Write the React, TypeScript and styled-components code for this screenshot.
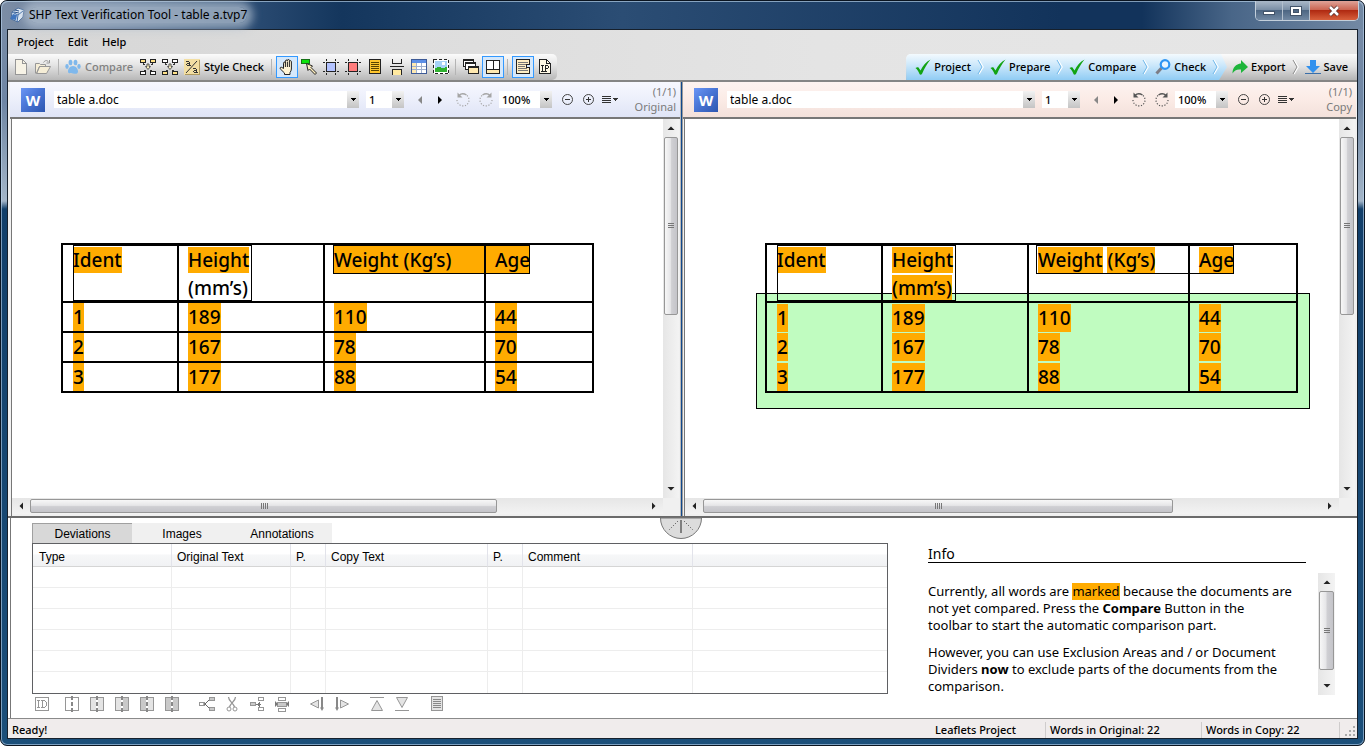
import React from "react";
import styled, { createGlobalStyle, css } from "styled-components";

const ui = `"Noto Sans", "Open Sans", sans-serif`;
const arial = `"Liberation Sans", Arial, sans-serif`;
const orange = "#ffab00";

const Global = createGlobalStyle`
  *, *::before, *::after { box-sizing: border-box; }
  body { margin: 0; font-family: ${ui}; font-size: 11px; color: #000; }
  button { border: 0; padding: 0; background: none; font: inherit; color: inherit; }
  svg { display: block; }
`;

/* ---------- window frame ---------- */

const Window = styled.div`
  display: flex;
  flex-direction: column;
  min-height: 100vh;
  border-radius: 7px;
  border: 1px solid #0a1420;
  padding: 0 7px 7px;
  box-shadow: inset 0 0 0 1px rgba(190, 215, 240, 0.6);
  background: linear-gradient(180deg, #7a8da8 0, #6f86a3 100px, #a3b5c8 200px, #123f6a 208px, #1b4f7a 100%);
`;

const TitleBar = styled.header`
  display: flex;
  align-items: center;
  height: 28px;
  margin: 0 -6px;
  padding-left: 7px;
  position: relative;
  border-radius: 6px 6px 0 0;
  background: linear-gradient(90deg, #7c8da5 0, #62799a 100px, #2a4b72 250px, #14365d 340px, #2b4d74 620px, #12335b 1060px, #12335b 1140px, #496688 1230px, #7389a4 100%);
  box-shadow: inset 0 1px 0 rgba(200, 225, 245, 0.6);
`;

const Title = styled.h1`
  margin: 0 0 0 4px;
  font-size: 12px;
  font-weight: 400;
  line-height: 16px;
  border-radius: 8px;
  background: rgba(178, 192, 208, 0.7);
  box-shadow: 0 0 8px 6px rgba(178, 192, 208, 0.7);
`;

const WindowButtons = styled.div`
  position: absolute;
  top: 0;
  right: 4px;
  display: flex;
  border: 1px solid #c3cfdb;
  border-top: 0;
  border-radius: 0 0 5px 5px;
  overflow: hidden;
`;

const WindowButton = styled.button<{ $close?: boolean }>`
  display: grid;
  place-items: center;
  width: ${(p) => (p.$close ? 48 : 27)}px;
  height: 19px;
  border-right: 1px solid #b3c0ce;
  background: ${(p) =>
    p.$close
      ? "linear-gradient(180deg, #dfa398 0, #cc6653 45%, #b02a12 50%, #d8603c 100%)"
      : "linear-gradient(180deg, #aab8c8 0, #7b8fa6 45%, #4d6683 50%, #7188a2 100%)"};
  &:last-child { border-right: 0; }
`;

const Client = styled.div`
  flex: 1;
  display: flex;
  flex-direction: column;
  border: 1px solid #16202c;
  margin: 0 -1px -1px;
  background: #fff;
`;

/* ---------- menu and toolbar ---------- */

const Chrome = styled.div`
  background: linear-gradient(90deg, #d6d6d6 0, #e4e4e4 60%, #e6e6e6 100%);
  border-bottom: 2px solid #858585;
`;

const MenuBar = styled.nav`
  display: flex;
  gap: 14px;
  align-items: center;
  height: 24px;
  padding-left: 9px;
`;

const MenuItem = styled.button`
  line-height: 16px;
  font-weight: 500;
`;

const ToolRow = styled.div`
  display: flex;
  justify-content: space-between;
  height: 26px;
`;

const ToolBar = styled.div`
  display: flex;
  align-items: center;
  padding: 0 1px 0 2px;
  border-radius: 0 5px 5px 0;
  background: linear-gradient(180deg, #fbfbfb 0, #e6e6e6 40%, #b8b8b8 100%);
`;

const ToolButton = styled.button<{ $on?: boolean }>`
  display: grid;
  place-items: center;
  width: 22px;
  height: 22px;
  ${(p) =>
    p.$on &&
    css`
      border: 1px solid #3399ff;
      background: #d5e8fb;
    `}
`;

const TextTool = styled.button<{ $dim?: boolean }>`
  display: flex;
  align-items: center;
  gap: 4px;
  height: 22px;
  padding: 0 4px 0 3px;
  font-weight: 500;
  line-height: 16px;
  color: ${(p) => (p.$dim ? "#808080" : "#000")};
`;

const Sep = styled.span`
  width: 8px;
  height: 16px;
  background: linear-gradient(#b4b4b4, #b4b4b4) center / 1px 100% no-repeat;
`;

const Steps = styled.div`
  display: flex;
  align-items: center;
  border-radius: 5px 0 0 0;
  overflow: hidden;
  padding-right: 5px;
  background: linear-gradient(180deg, #fbfbfb 0, #e0e0e0 50%, #b4b4b4 100%);
`;

const StepGroup = styled.div<{ $done?: boolean }>`
  display: flex;
  align-items: center;
  height: 26px;
  ${(p) =>
    p.$done &&
    css`
      padding: 0 7px 0 4px;
      background: linear-gradient(180deg, #f3fafe 0, #cfe9fb 40%, #90ccf4 100%);
      clip-path: polygon(0 0, calc(100% - 6px) 0, 100% 50%, calc(100% - 8px) 100%, 0 100%);
    `}
`;

const Step = styled.button`
  display: flex;
  align-items: center;
  gap: 3px;
  padding: 0 4px 0 5px;
  font-weight: 500;
  line-height: 16px;
`;

/* ---------- document panes ---------- */

const Panes = styled.main`
  flex: 1;
  display: grid;
  grid-template-columns: minmax(0, 670fr) 3px minmax(0, 673fr);
  padding: 0 1px 0 2px;
  background: #f0f0f0;
  border-bottom: 2px solid #6b6b6b;
`;

const Splitter = styled.div`
  background: linear-gradient(90deg, #b9b9b9 0, #b9b9b9 1px, #10488c 1px, #10488c 2px, #9a9a9a 2px);
`;

const Pane = styled.section`
  display: flex;
  flex-direction: column;
`;

const DocBar = styled.div<{ $tint: string }>`
  display: flex;
  align-items: center;
  height: 37px;
  padding: 0 4px 0 11px;
  background: ${(p) => p.$tint};
  border-bottom: 2px solid #777;
`;

const WordBadge = styled.span`
  display: grid;
  place-items: center;
  width: 24px;
  height: 24px;
  margin-right: 9px;
  background: linear-gradient(135deg, #6b96f5 0, #4a76d6 45%, #2c56b0 100%);
  color: #fff;
  font-family: "Open Sans", sans-serif;
  font-size: 15px;
  font-weight: 700;
`;

const Combo = styled.label<{ $width?: number }>`
  display: grid;
  grid-template-columns: minmax(0, 1fr) 12px;
  height: 17px;
  background: #fff;
  ${(p) => (p.$width ? `flex: 0 0 ${p.$width}px;` : "flex: 1; margin-right: 7px;")}
`;

const ComboArrow = styled.span`
  display: grid;
  place-items: center;
  background: linear-gradient(180deg, #f2f2f2, #c4c4c4);
`;

const Select = styled.select<{ $large?: boolean }>`
  appearance: none;
  min-width: 0;
  border: 0;
  padding: 1px 0 0 3px;
  background: transparent;
  font-family: ${ui};
  font-size: ${(p) => (p.$large ? 12 : 11)}px;
  font-weight: ${(p) => (p.$large ? 400 : 500)};
  line-height: 16px;
  color: #000;
`;

const BarButtons = styled.div<{ $step: number; $pad?: string }>`
  display: flex;
  padding: ${(p) => p.$pad ?? "0"};
  button {
    display: grid;
    place-items: center;
    width: ${(p) => p.$step}px;
    height: 20px;
  }
`;

const DocLabel = styled.div`
  flex: 0 0 52px;
  padding-bottom: 2px;
  text-align: right;
  line-height: 15px;
  font-size: 11px;
  color: #7a7a7a;
`;

const View = styled.div`
  flex: 1;
  display: grid;
  grid-template: minmax(0, 1fr) 16px / minmax(0, 1fr) 16px;
  margin-left: 1px;
  padding: 0 1px 2px 0;
  border-left: 1px solid #777;
  background: #f0f0f0;
`;

const Page = styled.div<{ $left: number }>`
  min-height: 378px;
  padding: 124px 0 0 ${(p) => p.$left}px;
  background: #fff;
  overflow: hidden;
`;

const Sheet = styled.div`
  position: relative;
  isolation: isolate;
  width: 533px;
`;

const DocTable = styled.table<{ $excluded?: boolean }>`
  width: 533px;
  table-layout: fixed;
  border-collapse: collapse;
  font-size: 19px;
  line-height: 28px;
  font-weight: 500;
  border: 2px solid #000;
  tr { height: 30px; }
  thead tr { height: 58px; border-bottom: 2px solid #000; }
  th, td {
    padding: 0 0 0 10px;
    text-align: left;
    font-weight: 500;
    border-left: 2px solid #000;
    border-right: 2px solid #000;
    white-space: nowrap;
  }
  th + th, td + td { padding-left: 9px; }
  th { vertical-align: top; }
  tbody tr { ${(p) => (p.$excluded ? "" : "border-bottom: 2px solid #000;")} }
`;

const Line = styled.div`
  height: 28px;
  padding-top: 2px;
`;

const Word = styled.mark<{ $plain?: boolean }>`
  display: inline-block;
  color: #000;
  line-height: 28px;
  vertical-align: top;
  background: ${(p) => (p.$plain ? "transparent" : orange)};
  ${Line} & { line-height: 26px; }
`;

const Area = styled.div<{ $box: [number, number, number, number]; $fill?: string; $front?: boolean }>`
  position: absolute;
  left: ${(p) => p.$box[0]}px;
  top: ${(p) => p.$box[1]}px;
  width: ${(p) => p.$box[2]}px;
  height: ${(p) => p.$box[3]}px;
  border: 1px solid #000;
  background: ${(p) => p.$fill ?? "transparent"};
  z-index: ${(p) => (p.$front ? 1 : -1)};
`;

/* ---------- scroll bars ---------- */

const Track = styled.div<{ $dir: "v" | "h" }>`
  display: flex;
  flex-direction: ${(p) => (p.$dir === "v" ? "column" : "row")};
  align-items: stretch;
  background: ${(p) =>
    p.$dir === "v" ? "linear-gradient(90deg, #e6e6e6, #f3f3f3)" : "linear-gradient(180deg, #e6e6e6, #f3f3f3)"};
  button {
    display: grid;
    place-items: center;
    flex: 0 0 18px;
  }
`;

const Rail = styled.div<{ $dir: "v" | "h" }>`
  flex: 1;
  min-height: 0;
  display: flex;
  flex-direction: ${(p) => (p.$dir === "v" ? "column" : "row")};
`;

const Thumb = styled.div<{ $dir: "v" | "h"; $size: number }>`
  flex: 0 0 ${(p) => p.$size}%;
  display: grid;
  place-items: center;
  margin: ${(p) => (p.$dir === "v" ? "0 1px" : "1px 0")};
  border: 1px solid #979797;
  border-radius: 2px;
  background: ${(p) =>
    `linear-gradient(${p.$dir === "v" ? 90 : 180}deg, #f7f7f7 0, #e6e6e8 45%, #cfcfd3 55%, #c4c4c9 100%)`};
`;

/* ---------- bottom panel ---------- */

const Bottom = styled.section`
  position: relative;
  display: flex;
  margin-left: 2px;
  border-left: 1px solid #777;
  padding: 5px 22px 4px 21px;
  background: #fff;
`;

const Handle = styled.button`
  position: absolute;
  top: -1px;
  left: 50%;
  margin-left: -24px;
`;

const Lists = styled.div`
  flex: 1;
  min-width: 0;
`;

const Tabs = styled.div`
  display: flex;
  height: 20px;
  font-family: ${arial};
  font-size: 12px;
`;

const Tab = styled.button<{ $on?: boolean }>`
  width: 100px;
  padding: ${(p) => (p.$on ? "1px 0 0" : "2px 0 0")};
  background: ${(p) => (p.$on ? "#d8d8d8" : "#f0f0f0")};
  border: solid #a0a0a0;
  border-width: ${(p) => (p.$on ? "1px 0 0 1px" : "0")};
`;

const Grid = styled.table`
  width: 100%;
  table-layout: fixed;
  border-collapse: separate;
  border-spacing: 0;
  border: 1px solid #5f6063;
  font-family: ${arial};
  font-size: 12px;
  th {
    height: 23px;
    padding: 3px 0 0 6px;
    text-align: left;
    font-weight: 400;
    border-right: 1px solid #e2e3ea;
    border-bottom: 1px solid #d5d5d5;
    background: linear-gradient(180deg, #fff 0, #fff 45%, #f6f7f8 50%, #f1f2f4 100%);
  }
  th + th { padding-left: 5px; }
  td {
    height: 21px;
    padding: 0;
    border-right: 1px solid #ededed;
    border-bottom: 1px solid #ededed;
  }
  th:last-child, td:last-child { border-right: 0; }
  tbody tr:last-child td { border-bottom: 0; }
`;

const EditRow = styled.div`
  display: flex;
  height: 20px;
  margin-left: -3px;
`;

const EditButton = styled.button<{ $gap?: number }>`
  display: grid;
  place-items: center;
  width: 25px;
  margin-left: ${(p) => p.$gap ?? 0}px;
`;

const Info = styled.aside`
  flex: 0 0 407px;
  margin-left: 40px;
  padding-top: 23px;
`;

const InfoTitle = styled.h2`
  margin: 0 29px 10px 0;
  font-size: 14px;
  font-weight: 400;
  line-height: 16px;
  border-bottom: 1px solid #000;
`;

const InfoBody = styled.div`
  display: grid;
  grid-template-columns: minmax(0, 1fr) 17px;
  height: 121px;
`;

const InfoText = styled.div`
  padding: 10px 18px 0 0;
  font-size: 13px;
  line-height: 17px;
  p { margin: 0; white-space: nowrap; }
  p + p { margin-top: 10px; }
  mark { display: inline-block; background: ${orange}; line-height: 17px; }
`;

const Status = styled.footer`
  display: flex;
  align-items: center;
  height: 20px;
  padding-top: 2px;
  border-top: 1px solid #8a8a8a;
  background: #f0ecec;
  font-weight: 500;
  line-height: 16px;
`;

const Cell = styled.span<{ $width?: number }>`
  ${(p) => (p.$width ? `flex: 0 0 ${p.$width}px;` : "flex: 1;")}
  padding-left: 4px;
  border-right: ${(p) => (p.$width ? "1px solid #cfcccc" : "0")};
`;

/* ---------- drawings ---------- */

const Ico: React.FC<{ w?: number; h?: number; crisp?: boolean; children: React.ReactNode }> = ({
  w = 16,
  h = 16,
  crisp = true,
  children,
}) => (
  <svg width={w} height={h} viewBox={`0 0 ${w} ${h}`} fill="none" shapeRendering={crisp ? "crispEdges" : "auto"} aria-hidden>
    {children}
  </svg>
);

const Tri: React.FC<{ d: "u" | "d" | "l" | "r"; color?: string; big?: boolean }> = ({ d, color = "#222", big }) => {
  const paths = {
    u: "M0.500 6 L4 2.500 L7.500 6Z",
    d: "M0.500 2 L7.500 2 L4 5.500Z",
    l: big ? "M6 0 L6 8 L2 4Z" : "M6 0.500 L6 7.500 L2.500 4Z",
    r: big ? "M2 0 L2 8 L6 4Z" : "M2 0.500 L2 7.500 L5.500 4Z",
  };
  return (
    <Ico w={8} h={8} crisp={false}>
      <path d={paths[d]} fill={color} />
    </Ico>
  );
};

const Flow: React.FC<{ top: string; bottom: string }> = ({ top, bottom }) => (
  <Ico>
    <path d="M3.500 4v1.500h1.500M12.500 4v1.500h-1.500M4 11.500h2M10 11.500h2" stroke="#333" />
    <rect x="0.500" y="0.500" width="5" height="3" fill={top} stroke="#222" />
    <rect x="10.500" y="0.500" width="5" height="3" fill={top} stroke="#222" />
    <rect x="0.500" y="12.500" width="5" height="3" fill={bottom} stroke="#222" />
    <rect x="10.500" y="12.500" width="5" height="3" fill={bottom} stroke="#222" />
    <path d="M7 5h2v2.500h1.500L8 10.500 5.500 7.500H7z" fill="#fff3c0" stroke="#555" shapeRendering="auto" />
  </Ico>
);

const Crop: React.FC<{ fill: string }> = ({ fill }) => (
  <Ico>
    <rect x="3.500" y="3.500" width="9" height="9" fill={fill} stroke="#222" />
    <path d="M0 3.500h2M0 12.500h2M14 3.500h2M14 12.500h2M3.500 0v2M12.500 0v2M3.500 14v2M12.500 14v2" stroke="#222" />
  </Ico>
);

const Check = () => (
  <Ico crisp={false}>
    <path d="M0.500 9 C2 8 3 8 3.500 8.500 L5.500 11.500 C8 6.500 11 3 15.500 0.500 C12 5 9.500 9 7 15 C6 16 5 16 4.500 15 C3.500 12.500 2.500 10.500 0.500 9Z" fill="#12a312" />
  </Ico>
);

const Chevron: React.FC<{ color?: string }> = ({ color = "#6fb8ea" }) => (
  <Ico w={10} h={18} crisp={false}>
    <path d="M4 2 L8 9 L4 16" stroke="#fff" strokeWidth="1.500" />
    <path d="M3 2 L7 9 L3 16" stroke={color} />
  </Ico>
);

const Rotate: React.FC<{ cw?: boolean; color: string }> = ({ cw, color }) => (
  <Ico crisp={false}>
    <g transform={cw ? "translate(16 0) scale(-1 1)" : undefined}>
      <path d="M12 3.500 A6 6 0 1 1 2 8" stroke={color} strokeWidth="1.200" strokeDasharray="1.200 1.600" />
      <path d="M4 3.500 C6 1.500 9 1.500 11.500 3" stroke={color} strokeWidth="1.400" />
      <path d="M2.500 0.500v5h5z" fill={color} />
    </g>
  </Ico>
);

const Zoom: React.FC<{ plus?: boolean }> = ({ plus }) => (
  <Ico w={13} h={13} crisp={false}>
    <circle cx="6.500" cy="6.500" r="5" stroke="#444" />
    <path d={plus ? "M4 6.500h5M6.500 4v5" : "M4 6.500h5"} stroke="#333" />
  </Ico>
);

const MenuIcon = () => (
  <Ico w={16} h={10}>
    <path d="M0 1.500h9M0 3.500h9M0 5.500h9M0 7.500h9" stroke="#333" />
    <path d="M10 3h6l-3 3z" fill="#333" />
  </Ico>
);

const GREY = "#969696";
const LIGHT = "#e4e4e4";
const MID = "#c9c9c9";

const Split: React.FC<{ l: string; r: string }> = ({ l, r }) => (
  <Ico>
    <rect x="1" y="2" width="7" height="12" fill={l} />
    <rect x="8" y="2" width="7" height="12" fill={r} />
    <rect x="1.500" y="1.500" width="13" height="13" stroke={GREY} />
    <path d="M8 0v16" stroke="#fff" strokeWidth="2" />
    <path d="M8 0v16" stroke="#888" strokeWidth="2" strokeDasharray="4 2" />
  </Ico>
);

const editIcons: { name: string; gap?: number; icon: React.ReactNode }[] = [
  {
    name: "Identifier",
    icon: (
      <Ico>
        <rect x="1.500" y="1.500" width="13" height="13" stroke={GREY} />
        <path d="M3 4.500h3M3 11.500h3M4.500 4v8M7 4.500h4M7 11.500h4M8.500 4v8M11.500 5v1M12.500 6v4M11.500 10v1" stroke={GREY} />
      </Ico>
    ),
  },
  { name: "No side", gap: 5, icon: <Split l="#fff" r="#fff" /> },
  { name: "Both light", icon: <Split l={LIGHT} r={LIGHT} /> },
  { name: "Right side", icon: <Split l={LIGHT} r={MID} /> },
  { name: "Left side", icon: <Split l={MID} r={LIGHT} /> },
  { name: "Both sides", icon: <Split l={MID} r={MID} /> },
  {
    name: "Branch",
    gap: 10,
    icon: (
      <Ico>
        <rect x="0.500" y="6.500" width="5" height="3" stroke={GREY} />
        <rect x="10.500" y="1.500" width="5" height="3" fill={MID} stroke={GREY} />
        <rect x="10.500" y="11.500" width="5" height="3" fill={MID} stroke={GREY} />
        <path d="M4 8h2l4-4M6 8l4 4" stroke="#666" shapeRendering="auto" />
      </Ico>
    ),
  },
  {
    name: "Cut",
    icon: (
      <Ico crisp={false}>
        <path d="M4.500 1c0 4 5 6 6 10M11.500 1c0 4-5 6-6 10" stroke={GREY} strokeWidth="1.300" />
        <circle cx="5" cy="13" r="2" stroke={GREY} />
        <circle cx="11" cy="13" r="2" stroke={GREY} />
      </Ico>
    ),
  },
  {
    name: "Join",
    icon: (
      <Ico>
        <rect x="1.500" y="6.500" width="5" height="3" fill={MID} stroke={GREY} />
        <rect x="9.500" y="1.500" width="5" height="3" stroke={GREY} />
        <rect x="9.500" y="11.500" width="5" height="3" stroke={GREY} />
        <path d="M7 8.500h5M9.500 7v3M10.500 6v5" stroke="#777" />
      </Ico>
    ),
  },
  {
    name: "Merge",
    icon: (
      <Ico>
        <rect x="4.500" y="1.500" width="7" height="3" stroke={GREY} />
        <rect x="3.500" y="6.500" width="9" height="4" fill={MID} stroke={GREY} />
        <rect x="4.500" y="12.500" width="7" height="3" stroke={GREY} />
        <path d="M1 5v6l3-3zM15 5v6l-3-3z" fill="#777" shapeRendering="auto" />
      </Ico>
    ),
  },
  {
    name: "Previous",
    gap: 10,
    icon: (
      <Ico crisp={false}>
        <path d="M9.500 4v8l-8-4z" fill={LIGHT} stroke={GREY} />
        <path d="M13 1v11" stroke="#888" strokeWidth="2" />
        <path d="M11 11.500h4l-2 3.500z" fill="#888" />
      </Ico>
    ),
  },
  {
    name: "Next",
    icon: (
      <Ico crisp={false}>
        <path d="M6.500 4v8l8-4z" fill={LIGHT} stroke={GREY} />
        <path d="M3 1v11" stroke="#888" strokeWidth="2" />
        <path d="M1 11.500h4l-2 3.500z" fill="#888" />
      </Ico>
    ),
  },
  {
    name: "First",
    gap: 10,
    icon: (
      <Ico crisp={false}>
        <path d="M1 1.500h14" stroke={GREY} />
        <path d="M8 4.500l5.500 10h-11z" fill={LIGHT} stroke={GREY} />
      </Ico>
    ),
  },
  {
    name: "Last",
    icon: (
      <Ico crisp={false}>
        <path d="M1 14.500h14" stroke={GREY} />
        <path d="M8 11.500l-5.500-10h11z" fill={LIGHT} stroke={GREY} />
      </Ico>
    ),
  },
  {
    name: "Report",
    gap: 10,
    icon: (
      <Ico>
        <rect x="2.500" y="0.500" width="11" height="14" fill={LIGHT} stroke={GREY} />
        <path d="M4 3.500h8M4 5.500h8M4 7.500h8M4 9.500h8M4 11.500h8" stroke="#888" />
      </Ico>
    ),
  },
];

const viewTools: { name: string; on?: boolean; sep?: boolean; icon: React.ReactNode }[] = [
  {
    name: "Hand",
    on: true,
    icon: (
      <Ico crisp={false}>
        <path d="M4.500 9.500V4.200c0-1.500 1.900-1.500 1.900 0V2.200c0-1.600 2-1.600 2 0v-.7c0-1.400 2-1.400 2 0v1.200c0-1.400 2-1.400 2 0v7.300c0 1.500-.8 2.500-1.400 3.500v2H5.500v-1.500L1.200 9.800C.6 8.600 2 7.700 3 8.500z" fill="#fff4d4" stroke="#222" />
        <path d="M6.400 4v4M8.400 3v5M10.400 3v5" stroke="#222" />
      </Ico>
    ),
  },
  {
    name: "Select word",
    icon: (
      <Ico crisp={false}>
        <rect x="0.500" y="0.500" width="8" height="4" fill="#0be30b" stroke="#157015" />
        <path d="M5.500 4.500l6 2.500-1.500 1.500 5.500 5.500-1.500 1.500-5.500-5.500-1.500 1.500z" fill="#fff0c0" stroke="#222" />
      </Ico>
    ),
  },
  { name: "Include area", icon: <Crop fill="#b3c3ff" /> },
  { name: "Exclude area", icon: <Crop fill="#ff7d7d" /> },
  {
    name: "Text block",
    icon: (
      <Ico>
        <rect x="2.500" y="0.500" width="11" height="14" fill="#ffc62e" stroke="#222" />
        <path d="M4 3.500h8M4 5.500h8M4 7.500h8M4 9.500h8M4 11.500h8" stroke="#5a4400" />
      </Ico>
    ),
  },
  {
    name: "Divider",
    icon: (
      <Ico>
        <path d="M3.500 0v4.500h9V0M3.500 16v-5.500h9V16" stroke="#222" />
        <rect x="4" y="11" width="8" height="5" fill="#ffe9a0" />
        <path d="M1 7.500h14" stroke="#222" />
      </Ico>
    ),
  },
  {
    name: "Table",
    icon: (
      <Ico>
        <rect x="0.500" y="0.500" width="15" height="14" fill="#fff" stroke="#3d5a96" />
        <rect x="1" y="1" width="14" height="3" fill="#5d8fe6" />
        <rect x="1" y="4" width="4" height="10" fill="#ffe9b0" />
        <path d="M1 7.500h14M1 10.500h14M5.500 4v10M10.500 4v10" stroke="#9fb0cf" />
      </Ico>
    ),
  },
  {
    name: "Image",
    icon: (
      <Ico>
        <rect x="0.500" y="0.500" width="15" height="14" fill="#fff" stroke="#222" strokeDasharray="3 2" />
        <rect x="2" y="2" width="12" height="11" fill="#a6d2f7" />
        <path d="M2 13v-4l4-1 3 1 5-1v5z" fill="#2fb02f" />
        <rect x="9" y="3" width="3" height="3" fill="#fff" />
      </Ico>
    ),
  },
  {
    name: "Cascade",
    sep: true,
    icon: (
      <Ico>
        <path d="M0.500 0.500h10v7h-10zM0 1.500h11" fill="#fff" stroke="#222" />
        <path d="M2.500 3.500h10v7h-10zM2 4.500h11" fill="#fff" stroke="#222" />
        <path d="M5.500 7.500h10v7h-10zM5 8.500h11" fill="#ffe9b0" stroke="#222" />
      </Ico>
    ),
  },
  {
    name: "Split view",
    on: true,
    icon: (
      <Ico>
        <rect x="1" y="1" width="14" height="14" fill="#fff" />
        <rect x="1" y="10" width="14" height="5" fill="#ffe9b0" />
        <path d="M1.500 1.500h13v13h-13zM8 2v8M1 10.500h14" stroke="#222" />
      </Ico>
    ),
  },
  {
    name: "Text flow",
    on: true,
    sep: true,
    icon: (
      <Ico>
        <path d="M1.500 0.500h13v5h-3v3h3v6h-13z" fill="#ffefc4" stroke="#222" />
        <path d="M3 3.500h10M3 5.500h8M3 7.500h7M3 9.500h9M3 11.500h10" stroke="#777" />
      </Ico>
    ),
  },
  {
    name: "Properties",
    icon: (
      <Ico>
        <path d="M2.500 0.500h7l4 4v10h-11z" fill="#fff8e4" stroke="#222" />
        <path d="M9.500 1v3.500h4" stroke="#222" />
        <path d="M4 6.500h3M4 12.500h3M5.500 6v7M8.500 6v7M9 6.500h2M11.500 7v2M9 9.500h2M7 12.500h3" stroke="#222" />
      </Ico>
    ),
  },
];

/* ---------- components ---------- */

const ScrollBar: React.FC<{ dir: "v" | "h"; size: number }> = ({ dir, size }) => (
  <Track $dir={dir}>
    <button aria-label="Scroll back">
      <Tri d={dir === "v" ? "u" : "l"} />
    </button>
    <Rail $dir={dir}>
      <Thumb $dir={dir} $size={size}>
        <Ico w={8} h={8}>
          <path d={dir === "v" ? "M1 1.500h6M1 3.500h6M1 5.500h6" : "M1.500 1v6M3.500 1v6M5.500 1v6M7.500 1v6"} stroke="#777" />
        </Ico>
      </Thumb>
    </Rail>
    <button aria-label="Scroll forward">
      <Tri d={dir === "v" ? "d" : "r"} />
    </button>
  </Track>
);

const Drop: React.FC<{ label: string; value: string; width?: number; large?: boolean }> = ({ label, value, width, large }) => (
  <Combo $width={width}>
    <Select aria-label={label} $large={large} defaultValue={value}>
      <option>{value}</option>
    </Select>
    <ComboArrow>
      <Ico w={6} h={4}>
        <path d="M0 0h6L3 3z" fill="#000" />
      </Ico>
    </ComboArrow>
  </Combo>
);

type PaneProps = { side: string; tint: string; rotate: string; children: React.ReactNode; pageLeft: number };

const DocumentPane: React.FC<PaneProps> = ({ side, tint, rotate, children, pageLeft }) => (
  <Pane aria-label={side}>
    <DocBar $tint={tint}>
      <WordBadge>W</WordBadge>
      <Drop label="File" value="table a.doc" large />
      <Drop label="Page" value="1" width={38} />
      <BarButtons $step={20} $pad="0 0 0 6px">
        <button aria-label="Previous page"><Tri d="l" big color="#888" /></button>
        <button aria-label="Next page"><Tri d="r" big color="#000" /></button>
      </BarButtons>
      <BarButtons $step={23} $pad="0 2px 0 1px">
        <button aria-label="Rotate left"><Rotate color={rotate} /></button>
        <button aria-label="Rotate right"><Rotate cw color={rotate} /></button>
      </BarButtons>
      <Drop label="Zoom" value="100%" width={53} />
      <BarButtons $step={21} $pad="0 4px 0 5px">
        <button aria-label="Zoom out"><Zoom /></button>
        <button aria-label="Zoom in"><Zoom plus /></button>
        <button aria-label="View options"><MenuIcon /></button>
      </BarButtons>
      <DocLabel>
        (1/1)
        <br />
        {side}
      </DocLabel>
    </DocBar>
    <View>
      <Page $left={pageLeft}>
        <Sheet>{children}</Sheet>
      </Page>
      <ScrollBar dir="v" size={52} />
      <ScrollBar dir="h" size={76} />
    </View>
  </Pane>
);

const rows = [
  ["1", "189", "110", "44"],
  ["2", "167", "78", "70"],
  ["3", "177", "88", "54"],
];

const DataTable: React.FC<{ copy?: boolean }> = ({ copy }) => (
  <DocTable $excluded={copy}>
    <colgroup>
      <col style={{ width: 116 }} />
      <col style={{ width: 146 }} />
      <col style={{ width: 161 }} />
      <col />
    </colgroup>
    <thead>
      <tr>
        <th><Line><Word>Ident</Word></Line></th>
        <th>
          <Line><Word>Height</Word></Line>
          <Line><Word $plain={!copy}>(mm’s)</Word></Line>
        </th>
        <th><Line><Word>Weight</Word> <Word>(Kg’s)</Word></Line></th>
        <th><Line><Word>Age</Word></Line></th>
      </tr>
    </thead>
    <tbody>
      {rows.map((r) => (
        <tr key={r[0]}>
          {r.map((c) => (
            <td key={c}><Word>{c}</Word></td>
          ))}
        </tr>
      ))}
    </tbody>
  </DocTable>
);

const columns: [string, number?][] = [
  ["Type", 139],
  ["Original Text", 119],
  ["P.", 35],
  ["Copy Text", 162],
  ["P.", 35],
  ["Comment", 170],
  [""],
];

export default function App() {
  return (
    <>
      <Global />
      <Window>
        <TitleBar>
          <Ico crisp={false}>
            <path d="M3 5l6-4 6 2-1 7-5 5-7-3z" fill="#dfeaf6" stroke="#4d6f9c" />
            <path d="M3 5l6 3 5-4M9 8l-1 7" stroke="#3d6aa8" />
            <path d="M1 12l3-5 4 1-1 5z" fill="#3f74bd" />
            <path d="M6 3l4 1M5 5l5 1" stroke="#274f88" />
          </Ico>
          <Title>SHP Text Verification Tool - table a.tvp7</Title>
          <WindowButtons>
            <WindowButton aria-label="Minimize">
              <Ico w={12} h={12}><rect x="0.500" y="6.500" width="11" height="3" fill="#fff" stroke="#43546a" /></Ico>
            </WindowButton>
            <WindowButton aria-label="Maximize">
              <Ico w={12} h={12}>
                <rect x="2" y="3" width="8" height="6" stroke="#fff" strokeWidth="2" />
                <path d="M0.500 1.500h11v9h-11zM3.500 4.500h5v3h-5z" stroke="#43546a" />
              </Ico>
            </WindowButton>
            <WindowButton $close aria-label="Close">
              <Ico w={12} h={12} crisp={false}>
                <path d="M2 2l8 8M10 2l-8 8" stroke="#55322f" strokeWidth="4" />
                <path d="M2 2l8 8M10 2l-8 8" stroke="#fff" strokeWidth="2.500" />
              </Ico>
            </WindowButton>
          </WindowButtons>
        </TitleBar>
        <Client>
          <Chrome>
            <MenuBar>
              <MenuItem>Project</MenuItem>
              <MenuItem>Edit</MenuItem>
              <MenuItem>Help</MenuItem>
            </MenuBar>
            <ToolRow>
              <ToolBar>
                <ToolButton aria-label="New">
                  <Ico>
                    <path d="M2.500 0.500h7l4 4v11h-11z" fill="#f7f3e6" stroke="#969696" />
                    <path d="M9.500 1v3.500h4" stroke="#969696" />
                  </Ico>
                </ToolButton>
                <ToolButton aria-label="Open">
                  <Ico crisp={false}>
                    <path d="M0.500 14.500v-10h4l1 1h5v2h-6l-3 7M1.500 14.500h10l4-7h-11z" fill="#f5edd6" stroke="#969696" />
                    <path d="M8.500 3.500c2-3 4-2 5-.5M14.500 1v3h-3" stroke="#969696" />
                  </Ico>
                </ToolButton>
                <Sep />
                <TextTool $dim>
                  <Ico crisp={false}>
                    <path d="M8 7c3 0 5 3 5 5.500S11 15 8 14.500 3 15 3 12.500 5 7 8 7z" fill="#7fb8ec" />
                    <ellipse cx="5.500" cy="3.500" rx="1.900" ry="2.800" fill="#7fb8ec" />
                    <ellipse cx="10.500" cy="3.500" rx="1.900" ry="2.800" fill="#7fb8ec" />
                    <ellipse cx="2" cy="7.500" rx="1.700" ry="2.400" fill="#7fb8ec" />
                    <ellipse cx="14" cy="7.500" rx="1.700" ry="2.400" fill="#7fb8ec" />
                  </Ico>
                  Compare
                </TextTool>
                <ToolButton aria-label="Compare originals"><Flow top="#ffe28a" bottom="#fff" /></ToolButton>
                <ToolButton aria-label="Compare copies"><Flow top="#fff" bottom="#ffe28a" /></ToolButton>
                <TextTool>
                  <Ico>
                    <rect width="16" height="16" fill="#f3dfa3" />
                    <path d="M0.500 15.500h15V0.500" stroke="#b09a5e" />
                    <path d="M2 14L13 2" stroke="#333" shapeRendering="auto" />
                    <path d="M2 2.500h3M5.500 3v4M3 4.500h2M2.500 5v1M3 6.500h4M9 9.500h3M12.500 10v4M10 11.500h2M9.500 12v1M10 13.500h4" stroke="#333" />
                  </Ico>
                  Style Check
                </TextTool>
                <Sep />
                {viewTools.map((t) => (
                  <React.Fragment key={t.name}>
                    {t.sep && <Sep />}
                    <ToolButton $on={t.on} aria-label={t.name}>{t.icon}</ToolButton>
                  </React.Fragment>
                ))}
              </ToolBar>
              <Steps>
                <StepGroup $done>
                  <Step><Check />Project</Step>
                  <Chevron />
                  <Step><Check />Prepare</Step>
                  <Chevron />
                  <Step><Check />Compare</Step>
                  <Chevron />
                  <Step>
                    <Ico crisp={false}>
                      <path d="M6.500 9L1.500 14.500" stroke="#7d7d86" strokeWidth="3" />
                      <circle cx="10" cy="5.500" r="4.300" fill="#e9f5ff" stroke="#2f95f3" strokeWidth="2.200" />
                    </Ico>
                    Check
                  </Step>
                  <Chevron />
                </StepGroup>
                <StepGroup>
                  <Step>
                    <Ico crisp={false}>
                      <path d="M9 1l7 7-7 6v-3.500C5 10 2.500 11 0.500 14.500 0.500 8.500 4 5 9 4.500z" fill="#1db53a" />
                    </Ico>
                    Export
                  </Step>
                  <Chevron color="#8c8c8c" />
                  <Step>
                    <Ico crisp={false}>
                      <path d="M5 1h6v6h4l-7 7-7-7h4z" fill="#3191ee" />
                      <path d="M0 14.500h16" stroke="#3a6ea8" />
                    </Ico>
                    Save
                  </Step>
                </StepGroup>
              </Steps>
            </ToolRow>
          </Chrome>

          <Panes>
            <DocumentPane
              side="Original"
              tint="linear-gradient(180deg, #f7f8ff 0, #eceffb 50%, #dfe4f6 100%)"
              rotate="#a5a5a5"
              pageLeft={49}
            >
              <Area $box={[12, 2, 179, 56]} $front />
              <Area $box={[272, 2, 197, 29]} $fill={orange} />
              <Area $box={[272, 2, 197, 29]} $front />
              <DataTable />
            </DocumentPane>
            <Splitter />
            <DocumentPane
              side="Copy"
              tint="linear-gradient(180deg, #fdf3f0 0, #fbebe6 50%, #f3e1db 100%)"
              rotate="#555"
              pageLeft={80}
            >
              <Area $box={[-9, 50, 554, 116]} $fill="#c0fcc0" />
              <Area $box={[12, 2, 179, 56]} $front />
              <Area $box={[271, 2, 198, 29]} $front />
              <DataTable copy />
            </DocumentPane>
          </Panes>

          <Bottom>
            <Handle aria-label="Resize panels">
              <Ico w={42} h={22} crisp={false}>
                <path d="M0.500 1 A20 20 0 0 0 41.500 1Z" fill="#dcdcdc" stroke="#777" />
                <path d="M21 3v13" stroke="#222" />
                <path d="M18 4l-9 9M24 4l9 9" stroke="#444" strokeDasharray="1 2" />
              </Ico>
            </Handle>
            <Lists>
              <Tabs role="tablist">
                <Tab role="tab" $on>Deviations</Tab>
                <Tab role="tab">Images</Tab>
                <Tab role="tab">Annotations</Tab>
              </Tabs>
              <Grid>
                <colgroup>
                  {columns.map(([, w], i) => (
                    <col key={i} style={w ? { width: w } : undefined} />
                  ))}
                </colgroup>
                <thead>
                  <tr>
                    {columns.map(([c], i) => (
                      <th key={i}>{c}</th>
                    ))}
                  </tr>
                </thead>
                <tbody>
                  {[0, 1, 2, 3, 4, 5].map((r) => (
                    <tr key={r}>
                      {columns.map((_, i) => (
                        <td key={i} />
                      ))}
                    </tr>
                  ))}
                </tbody>
              </Grid>
              <EditRow>
                {editIcons.map((e) => (
                  <EditButton key={e.name} $gap={e.gap} aria-label={e.name}>{e.icon}</EditButton>
                ))}
              </EditRow>
            </Lists>
            <Info>
              <InfoTitle>Info</InfoTitle>
              <InfoBody>
                <InfoText>
                  <p>
                    Currently, all words are <mark>marked</mark> because the documents are
                    <br />
                    not yet compared. Press the <b>Compare</b> Button in the
                    <br />
                    toolbar to start the automatic comparison part.
                  </p>
                  <p>
                    However, you can use Exclusion Areas and / or Document
                    <br />
                    Dividers <b>now</b> to exclude parts of the documents from the
                    <br />
                    comparison.
                  </p>
                </InfoText>
                <ScrollBar dir="v" size={92} />
              </InfoBody>
            </Info>
          </Bottom>

          <Status>
            <Cell>Ready!</Cell>
            <Cell $width={115}>Leaflets Project</Cell>
            <Cell $width={156}>Words in Original: 22</Cell>
            <Cell $width={138}>Words in Copy: 22</Cell>
            <Ico w={17} h={18}>
              <path d="M13 6h2M9 10h2M13 10h2M5 14h2M9 14h2M13 14h2" stroke="#aaa" strokeWidth="2" />
            </Ico>
          </Status>
        </Client>
      </Window>
    </>
  );
}
